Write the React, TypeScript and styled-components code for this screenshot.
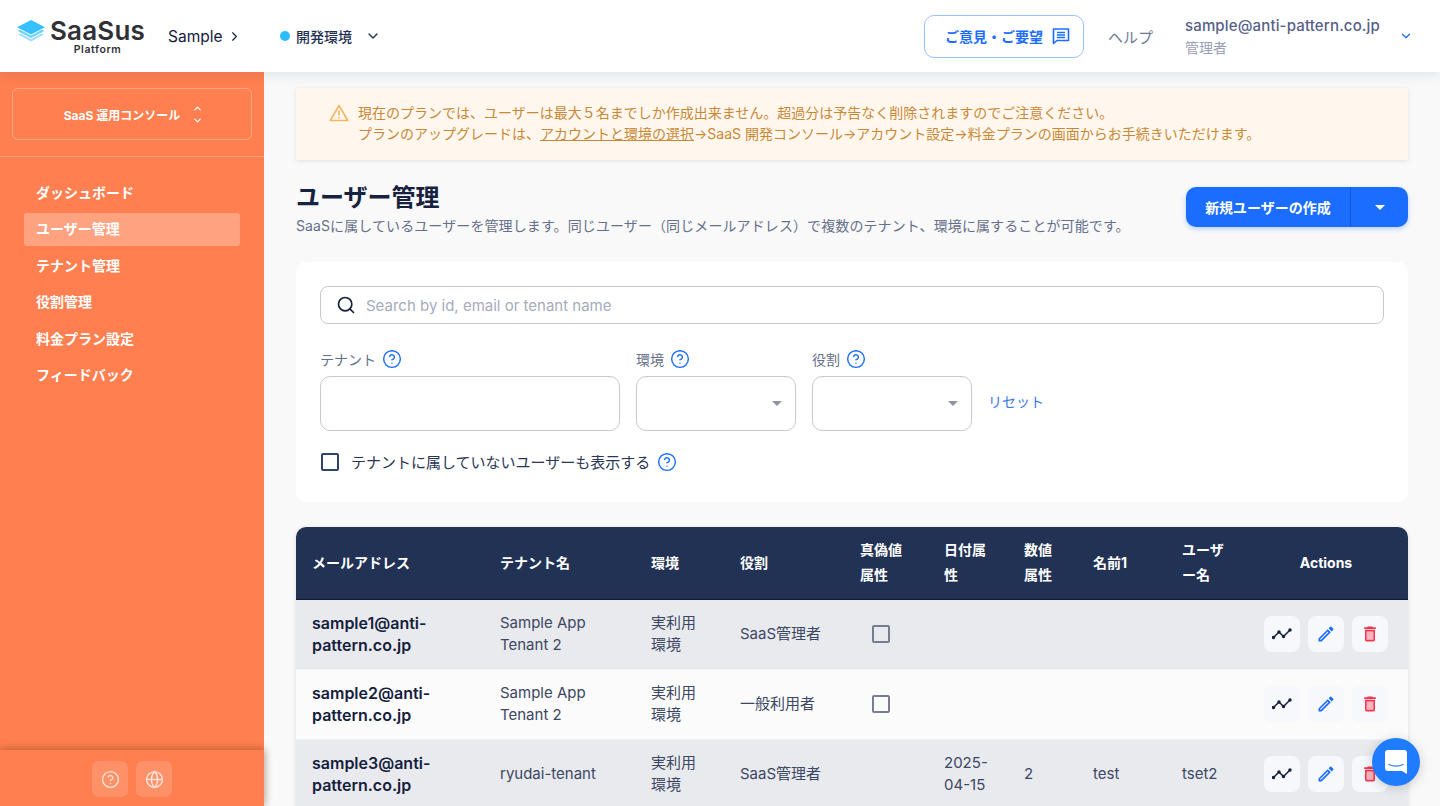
import React, { FC } from 'react'
import styled, { createGlobalStyle } from 'styled-components'
import { ChevronDown, ChevronRight, ChevronUp, Globe, HelpCircle, Search } from 'lucide-react'

const GlobalStyle = createGlobalStyle`
  html, body {
    margin: 0;
    padding: 0;
    height: 100%;
    overflow: hidden;
    background: #f9f9f9;
    font-family: Inter, "Noto Sans CJK JP", "Noto Sans", sans-serif;
    color: #1f2f54;
  }
  * { box-sizing: border-box; }
`

const Page = styled.div`
  position: relative;
  width: 1440px;
  height: 806px;
  overflow: hidden;
  display: flex;
  flex-direction: column;
`

/* header */
const Header = styled.header`
  position: relative;
  z-index: 3;
  flex: 0 0 72px;
  display: flex;
  align-items: center;
  padding: 0 27px 0 16px;
  background: #ffffff;
  box-shadow: 0 2px 12px rgb(31 47 84 / 12%);
`
const LogoBox = styled.div`
  display: flex;
  align-items: flex-start;
  width: 152px;
  height: 36px;
`
const LogoText = styled.div`
  display: flex;
  flex-direction: column;
  align-items: center;
  margin-left: 4px;
  margin-top: -2px;
`
const LogoName = styled.div`
  font-size: 26px;
  line-height: 29px;
  font-weight: 600;
  letter-spacing: 0.2px;
  color: #2f3136;
`
const LogoSub = styled.div`
  font-size: 10.5px;
  line-height: 10px;
  font-weight: 600;
  letter-spacing: 0.6px;
  color: #2f3136;
`
const AppName = styled.div`
  display: flex;
  align-items: center;
  gap: 4px;
  width: 112px;
  font-size: 15.5px;
  color: #14203c;
`
const EnvSelect = styled.div`
  display: flex;
  align-items: center;
  font-size: 14px;
  font-weight: 500;
  color: #1f2f54;
`
const EnvDot = styled.span`
  width: 10px;
  height: 10px;
  margin-right: 6px;
  border-radius: 50%;
  background: #2fbcff;
`
const EnvCaret = styled.span`
  display: flex;
  margin-left: 13px;
`
const HeaderRight = styled.div`
  display: flex;
  align-items: center;
  margin-left: auto;
`
const FeedbackButton = styled.button`
  display: flex;
  align-items: center;
  justify-content: flex-end;
  gap: 9px;
  width: 160px;
  height: 43px;
  padding: 0 13px 0 0;
  border: 1px solid #9cc0ff;
  border-radius: 10px;
  background: #ffffff;
  color: #1a6dff;
  font-family: inherit;
  font-size: 14px;
  font-weight: 700;
`
const HelpLink = styled.span`
  margin-left: 24px;
  width: 77px;
  font-size: 15px;
  color: #6e7a94;
`
const Account = styled.div`
  display: flex;
  flex-direction: column;
  gap: 2px;
  width: 206px;
`
const AccountMail = styled.div`
  font-size: 15px;
  line-height: 20px;
  font-weight: 500;
  color: #565f88;
  letter-spacing: 0.15px;
`
const AccountRole = styled.div`
  font-size: 14px;
  line-height: 19px;
  color: #9aa1b5;
`
const AccountCaret = styled.span`
  display: flex;
  margin-left: 8px;
  color: #1a6dff;
`

/* body */
const Body = styled.div`
  flex: 1;
  display: flex;
  min-height: 0;
`
const Sidebar = styled.aside`
  position: relative;
  z-index: 2;
  flex: 0 0 264px;
  display: flex;
  flex-direction: column;
  background: #ff7f50;
`
const Switcher = styled.div`
  display: flex;
  align-items: center;
  justify-content: center;
  gap: 12px;
  height: 52px;
  margin: 16px 12px;
  padding-left: 3px;
  border: 1px solid rgb(255 255 255 / 30%);
  border-radius: 6px;
  color: #ffffff;
  font-size: 12px;
  font-weight: 700;
`
const SwitcherIcon = styled.span`
  display: flex;
  flex-direction: column;
  align-items: center;
  gap: 1px;
`
const SideDivider = styled.div`
  height: 1px;
  background: rgb(255 255 255 / 28%);
`
const Nav = styled.nav`
  flex: 1;
  display: flex;
  flex-direction: column;
  gap: 3.5px;
  padding: 19px 24px 0;
`
const NavItem = styled.div<{ $active?: boolean }>`
  display: flex;
  align-items: center;
  height: 33px;
  padding: 0 12px 2px;
  border-radius: 3px;
  background: ${(p) => (p.$active ? 'rgb(255 255 255 / 28%)' : 'transparent')};
  color: #ffffff;
  font-size: 14px;
  font-weight: 700;
`
const SideFooter = styled.div`
  display: flex;
  justify-content: center;
  gap: 8px;
  height: 56px;
  padding-top: 11px;
  background: #ff7f50;
  box-shadow: 0 -2px 8px rgb(90 50 30 / 25%), 2px 0 6px rgb(90 50 30 / 22%);
`
const SideFooterButton = styled.div`
  display: flex;
  align-items: center;
  justify-content: center;
  width: 36px;
  height: 36px;
  border-radius: 7px;
  background: rgb(255 255 255 / 14%);
  color: #ffe3d8;
`

/* main */
const Main = styled.main`
  flex: 1;
  min-width: 0;
  padding: 16px 32px 0;
  overflow: hidden;
`
const Banner = styled.div`
  display: flex;
  height: 72px;
  padding: 14px 33px;
  background: #fff7ee;
  box-shadow: 0 1px 4px rgb(0 0 0 / 10%);
  color: #c98835;
  font-size: 14px;
  line-height: 21px;
`
const BannerIcon = styled.span`
  display: flex;
  margin-right: 9px;
  margin-top: 2px;
`
const BannerLink = styled.span`
  text-decoration: underline;
`
const TitleRow = styled.div`
  display: flex;
  justify-content: space-between;
  align-items: flex-start;
  margin-top: 22px;
`
const PageTitle = styled.h1`
  margin: 0;
  font-size: 24px;
  line-height: 31px;
  font-weight: 700;
  color: #16223f;
`
const PageDesc = styled.p`
  margin: 3px 0 0;
  font-size: 14px;
  line-height: 20px;
  letter-spacing: 0.1px;
  color: #66708a;
`
const SplitButton = styled.div`
  display: flex;
  height: 40px;
  margin-top: 5px;
  border-radius: 10px;
  background: #1a6dff;
  box-shadow: 0 2px 5px rgb(26 109 255 / 30%);
  color: #ffffff;
  font-size: 14px;
  font-weight: 700;
`
const SplitLabel = styled.div`
  display: flex;
  align-items: center;
  justify-content: center;
  width: 165px;
  border-right: 1px solid rgb(20 50 120 / 35%);
`
const SplitCaret = styled.div`
  display: flex;
  align-items: center;
  justify-content: center;
  width: 57px;
`
const TriangleDown = styled.span<{ $color: string; $size: number }>`
  width: 0;
  height: 0;
  border-left: ${(p) => p.$size}px solid transparent;
  border-right: ${(p) => p.$size}px solid transparent;
  border-top: ${(p) => p.$size}px solid ${(p) => p.$color};
`
const FilterCard = styled.section`
  margin-top: 26px;
  height: 240px;
  padding: 24px;
  border-radius: 10px;
  background: #ffffff;
`
const SearchBox = styled.div`
  display: flex;
  align-items: center;
  height: 38px;
  padding: 0 15px;
  border: 1px solid #c9c9cc;
  border-radius: 8px;
  color: #14203c;
`
const SearchHint = styled.span`
  margin-left: 10px;
  font-size: 15px;
  color: #a6acbb;
`
const FilterRow = styled.div`
  display: flex;
  gap: 16px;
  margin-top: 25px;
`
const Field = styled.div<{ $width: number }>`
  width: ${(p) => p.$width}px;
`
const FieldLabel = styled.div`
  display: flex;
  align-items: center;
  gap: 6px;
  height: 20px;
  font-size: 14px;
  color: #66708a;
`
const HelpBlue = styled.span`
  display: flex;
  color: #1a6dff;
`
const FieldControl = styled.div`
  display: flex;
  align-items: center;
  justify-content: flex-end;
  height: 55px;
  margin-top: 7px;
  padding-right: 13px;
  border: 1px solid #c9c9cc;
  border-radius: 10px;
  background: #ffffff;
`
const ResetLink = styled.span`
  margin-top: 43px;
  align-self: flex-start;
  font-size: 14px;
  line-height: 20px;
  color: #3b78e8;
`
const CheckRow = styled.div`
  display: flex;
  align-items: center;
  margin-top: 20px;
  padding-left: 1px;
  font-size: 15px;
  color: #2a3654;
`
const CheckBox = styled.span<{ $muted?: boolean }>`
  display: inline-block;
  width: 18px;
  height: 18px;
  border: 2px solid ${(p) => (p.$muted ? '#767d90' : '#2f4468')};
  border-radius: 2px;
`
const CheckLabel = styled.span`
  margin: 0 7px 0 12px;
`
const TableCard = styled.div`
  margin-top: 25px;
  border-radius: 10px 10px 0 0;
  overflow: hidden;
  box-shadow: 0 1px 4px rgb(31 47 84 / 14%);
`
const Table = styled.table`
  width: 100%;
  table-layout: fixed;
  border-collapse: collapse;
`
const HeadCell = styled.th<{ $width: number; $center?: boolean }>`
  width: ${(p) => p.$width}px;
  height: 72px;
  padding: 0 16px 1px;
  background: #213255;
  color: #ffffff;
  font-size: 14px;
  line-height: 25px;
  font-weight: 700;
  text-align: ${(p) => (p.$center ? 'center' : 'left')};
  word-break: break-all;
  border-bottom: 1px solid #101c38;
`
const Row = styled.tr<{ $odd: boolean }>`
  background: ${(p) => (p.$odd ? '#e9eaee' : '#fbfbfb')};
`
const Cell = styled.td<{ $bold?: boolean; $center?: boolean }>`
  height: 70px;
  padding: 0 16px;
  font-size: ${(p) => (p.$bold ? '16px' : '15px')};
  line-height: 22px;
  font-weight: ${(p) => (p.$bold ? 600 : 400)};
  color: ${(p) => (p.$bold ? '#14203c' : '#3c4763')};
  text-align: ${(p) => (p.$center ? 'center' : 'left')};
  border-bottom: 1px solid #f2f3f5;
  vertical-align: middle;
`
const CheckCell = styled.span`
  display: flex;
  justify-content: flex-start;
  padding-left: 12px;
`
const ActionGroup = styled.div`
  display: flex;
  justify-content: center;
  gap: 8px;
`
const ActionButton = styled.button`
  display: flex;
  align-items: center;
  justify-content: center;
  width: 36px;
  height: 36px;
  padding: 0;
  border: none;
  border-radius: 8px;
  background: #f7f8fb;
`
const ChatBubble = styled.div`
  position: absolute;
  z-index: 5;
  right: 20px;
  bottom: 20px;
  display: flex;
  align-items: center;
  justify-content: center;
  width: 48px;
  height: 48px;
  border-radius: 50%;
  background: #1f7bff;
  box-shadow: 0 2px 12px rgb(0 0 0 / 18%);
`

const LogoMark: FC = () => (
  <svg width="30" height="24" viewBox="0 0 30 24" style={{ marginTop: 2 }}>
    <path d="M15 21.5 2 14.6l2.4-1.2L15 19l10.6-5.6 2.4 1.2z" fill="#9fe0ff" />
    <path d="M15 18 1.5 11.1l2.6-1.3L15 15.5l10.9-5.7 2.6 1.3z" fill="#6ed0ff" />
    <path d="M15 0 1 7.2 15 14.4 29 7.2z" fill="#35c0ff" />
  </svg>
)

const CommentIcon: FC = () => (
  <svg width="18" height="18" viewBox="0 0 18 18" fill="none" stroke="currentColor" strokeWidth="1.6">
    <path d="M1.5 2h15v11.5H5L1.5 16.5z" strokeLinejoin="round" />
    <path d="M5 5.5h8M5 8h8M5 10.5h8" />
  </svg>
)

const WarningIcon: FC = () => (
  <svg width="20" height="18" viewBox="0 0 20 18" fill="none">
    <path d="M10 1.5 1.3 16.5h17.4z" stroke="#f5b560" strokeWidth="1.6" strokeLinejoin="round" />
    <path d="M10 6.5v5.2M10 13v1.6" stroke="#f5b560" strokeWidth="1.6" />
  </svg>
)

const TrendIcon: FC = () => (
  <svg width="20" height="14" viewBox="0 0 20 14" fill="none" stroke="#14203c" strokeWidth="1.5">
    <path d="M1.5 10.5 7 5l4.5 4.5L18 3" strokeLinejoin="round" />
    <circle cx="1.5" cy="10.5" r="1" fill="#14203c" />
    <circle cx="7" cy="5" r="1" fill="#14203c" />
    <circle cx="11.5" cy="9.5" r="1" fill="#14203c" />
    <circle cx="18" cy="3" r="1" fill="#14203c" />
  </svg>
)

const EditIcon: FC = () => (
  <svg width="20" height="20" viewBox="0 0 24 24" fill="#1a6dff">
    <path d="M3 17.25V21h3.75L17.81 9.94l-3.75-3.75L3 17.25zM5.92 19H5v-.92l9.06-9.06.92.92L5.92 19zM20.71 7.04a.996.996 0 0 0 0-1.41l-2.34-2.34a.996.996 0 0 0-1.41 0l-1.83 1.83 3.75 3.75 1.83-1.83z" />
  </svg>
)

const DeleteIcon: FC = () => (
  <svg width="20" height="20" viewBox="0 0 24 24" fill="#f5354f">
    <path d="M8 9h8v10H8z" fill="#f9b3bd" />
    <path d="M6 19c0 1.1.9 2 2 2h8c1.1 0 2-.9 2-2V7H6v12zM8 9h8v10H8V9zm7.5-5l-1-1h-5l-1 1H5v2h14V4h-3.5z" />
  </svg>
)

const ChatIcon: FC = () => (
  <svg width="24" height="26" viewBox="0 0 24 26">
    <path d="M4 1h16a3 3 0 0 1 3 3v21l-5-3H4a3 3 0 0 1-3-3V4a3 3 0 0 1 3-3z" fill="#ffffff" />
    <path d="M5 15.5c4 2.2 10 2.2 14 0" fill="none" stroke="#1f7bff" strokeWidth="1.3" strokeLinecap="round" />
  </svg>
)

const Help: FC = () => (
  <HelpBlue>
    <HelpCircle size={20} strokeWidth={1.7} />
  </HelpBlue>
)

const navItems = ['ダッシュボード', 'ユーザー管理', 'テナント管理', '役割管理', '料金プラン設定', 'フィードバック']

const columns = [
  { label: 'メールアドレス', width: 188 },
  { label: 'テナント名', width: 151 },
  { label: '環境', width: 89 },
  { label: '役割', width: 120 },
  { label: '真偽値属性', width: 84 },
  { label: '日付属性', width: 80 },
  { label: '数値属性', width: 69 },
  { label: '名前1', width: 89 },
  { label: 'ユーザー名', width: 78 },
]

const users = [
  { mail: 'sample1@anti-pattern.co.jp', tenant: 'Sample App Tenant 2', role: 'SaaS管理者', check: true },
  { mail: 'sample2@anti-pattern.co.jp', tenant: 'Sample App Tenant 2', role: '一般利用者', check: true },
  {
    mail: 'sample3@anti-pattern.co.jp',
    tenant: 'ryudai-tenant',
    role: 'SaaS管理者',
    check: false,
    date: '2025-04-15',
    num: '2',
    name: 'test',
    userName: 'tset2',
  },
]

export default function App(): JSX.Element {
  return (
    <Page>
      <GlobalStyle />
      <Header>
        <LogoBox>
          <LogoMark />
          <LogoText>
            <LogoName>SaaSus</LogoName>
            <LogoSub>Platform</LogoSub>
          </LogoText>
        </LogoBox>
        <AppName>
          Sample <ChevronRight size={15} strokeWidth={1.8} />
        </AppName>
        <EnvSelect>
          <EnvDot />
          開発環境
          <EnvCaret>
            <ChevronDown size={16} strokeWidth={2} />
          </EnvCaret>
        </EnvSelect>
        <HeaderRight>
          <FeedbackButton>
            ご意見・ご要望 <CommentIcon />
          </FeedbackButton>
          <HelpLink>ヘルプ</HelpLink>
          <Account>
            <AccountMail>sample@anti-pattern.co.jp</AccountMail>
            <AccountRole>管理者</AccountRole>
          </Account>
          <AccountCaret>
            <ChevronDown size={14} strokeWidth={2.2} />
          </AccountCaret>
        </HeaderRight>
      </Header>
      <Body>
        <Sidebar>
          <Switcher>
            SaaS 運用コンソール
            <SwitcherIcon>
              <ChevronUp size={11} strokeWidth={2.8} />
              <ChevronDown size={11} strokeWidth={2.8} />
            </SwitcherIcon>
          </Switcher>
          <SideDivider />
          <Nav>
            {navItems.map((item) => (
              <NavItem key={item} $active={item === 'ユーザー管理'}>
                {item}
              </NavItem>
            ))}
          </Nav>
          <SideFooter>
            <SideFooterButton>
              <HelpCircle size={19} strokeWidth={1.7} />
            </SideFooterButton>
            <SideFooterButton>
              <Globe size={19} strokeWidth={1.7} />
            </SideFooterButton>
          </SideFooter>
        </Sidebar>
        <Main>
          <Banner>
            <BannerIcon>
              <WarningIcon />
            </BannerIcon>
            <div>
              現在のプランでは、ユーザーは最大５名までしか作成出来ません。超過分は予告なく削除されますのでご注意ください。
              <br />
              プランのアップグレードは、<BannerLink>アカウントと環境の選択</BannerLink>→SaaS 開発コンソール→アカウント設定→料金プランの画面からお手続きいただけます。
            </div>
          </Banner>
          <TitleRow>
            <div>
              <PageTitle>ユーザー管理</PageTitle>
              <PageDesc>SaaSに属しているユーザーを管理します。同じユーザー（同じメールアドレス）で複数のテナント、環境に属することが可能です。</PageDesc>
            </div>
            <SplitButton>
              <SplitLabel>新規ユーザーの作成</SplitLabel>
              <SplitCaret>
                <TriangleDown $color="#ffffff" $size={5} />
              </SplitCaret>
            </SplitButton>
          </TitleRow>
          <FilterCard>
            <SearchBox>
              <Search size={20} strokeWidth={2} />
              <SearchHint>Search by id, email or tenant name</SearchHint>
            </SearchBox>
            <FilterRow>
              <Field $width={300}>
                <FieldLabel>
                  テナント <Help />
                </FieldLabel>
                <FieldControl />
              </Field>
              <Field $width={160}>
                <FieldLabel>
                  環境 <Help />
                </FieldLabel>
                <FieldControl>
                  <TriangleDown $color="#8d94a6" $size={5} />
                </FieldControl>
              </Field>
              <Field $width={160}>
                <FieldLabel>
                  役割 <Help />
                </FieldLabel>
                <FieldControl>
                  <TriangleDown $color="#8d94a6" $size={5} />
                </FieldControl>
              </Field>
              <ResetLink>リセット</ResetLink>
            </FilterRow>
            <CheckRow>
              <CheckBox />
              <CheckLabel>テナントに属していないユーザーも表示する</CheckLabel>
              <Help />
            </CheckRow>
          </FilterCard>
          <TableCard>
            <Table>
              <thead>
                <tr>
                  {columns.map((c) => (
                    <HeadCell key={c.label} $width={c.width}>
                      {c.label}
                    </HeadCell>
                  ))}
                  <HeadCell $width={164} $center>
                    Actions
                  </HeadCell>
                </tr>
              </thead>
              <tbody>
                {users.map((u, i) => (
                  <Row key={u.mail} $odd={i % 2 === 0}>
                    <Cell $bold>{u.mail}</Cell>
                    <Cell>{u.tenant}</Cell>
                    <Cell>実利用環境</Cell>
                    <Cell>{u.role}</Cell>
                    <Cell>
                      {u.check && (
                        <CheckCell>
                          <CheckBox $muted />
                        </CheckCell>
                      )}
                    </Cell>
                    <Cell>{u.date}</Cell>
                    <Cell>{u.num}</Cell>
                    <Cell>{u.name}</Cell>
                    <Cell>{u.userName}</Cell>
                    <Cell>
                      <ActionGroup>
                        <ActionButton>
                          <TrendIcon />
                        </ActionButton>
                        <ActionButton>
                          <EditIcon />
                        </ActionButton>
                        <ActionButton>
                          <DeleteIcon />
                        </ActionButton>
                      </ActionGroup>
                    </Cell>
                  </Row>
                ))}
              </tbody>
            </Table>
          </TableCard>
        </Main>
      </Body>
      <ChatBubble>
        <ChatIcon />
      </ChatBubble>
    </Page>
  )
}
